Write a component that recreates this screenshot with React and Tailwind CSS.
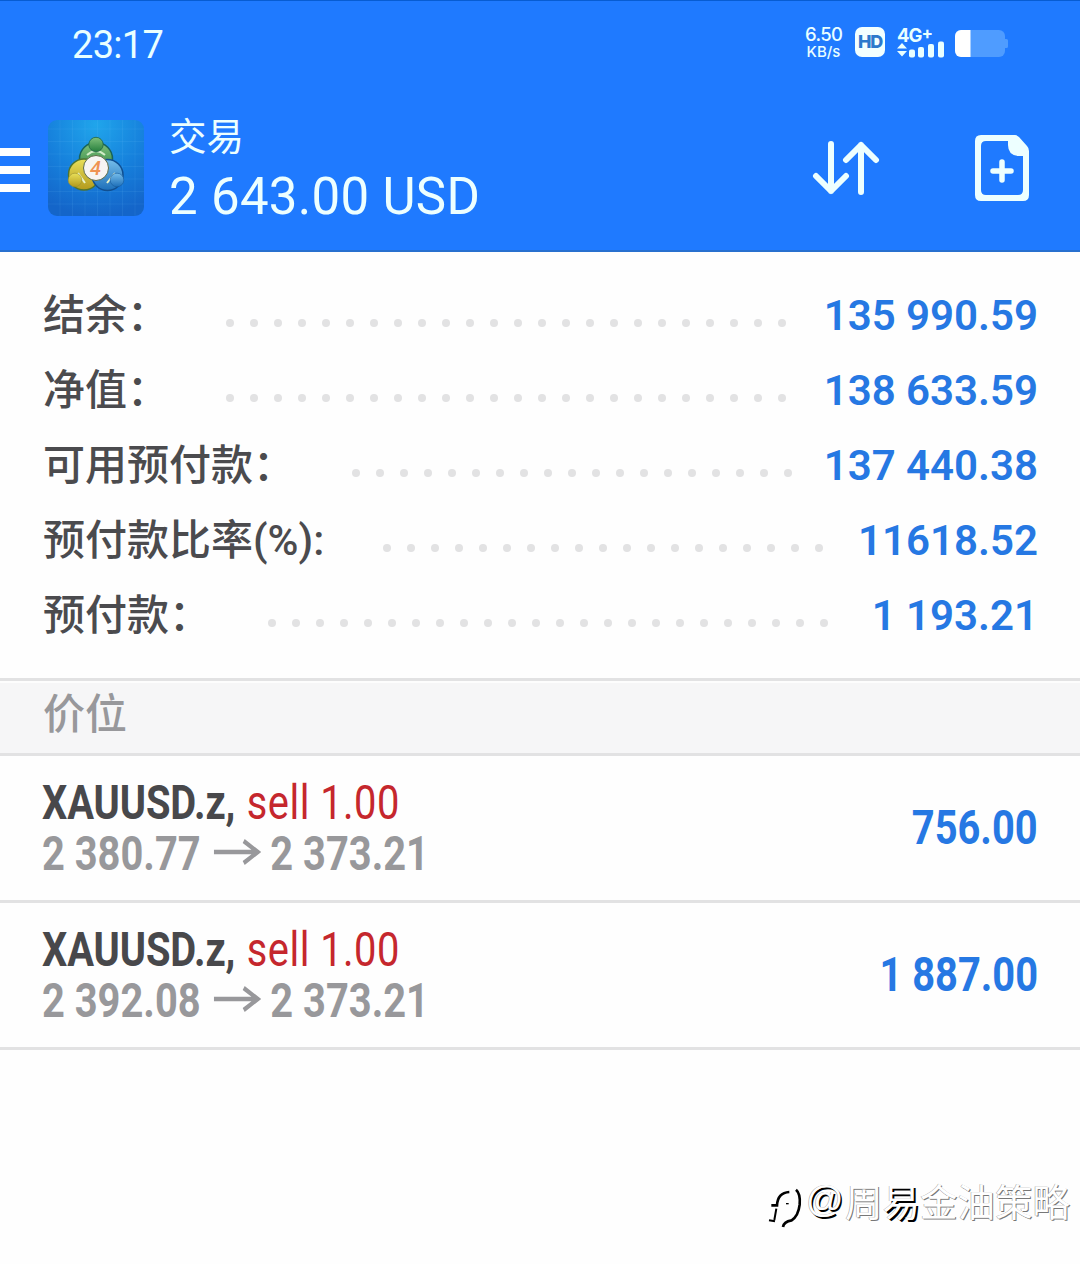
const summary = [
  { label: '结余：', value: '135 990.59', labelWidth: 'w-[183px]', dots: 24 },
  { label: '净值：', value: '138 633.59', labelWidth: 'w-[183px]', dots: 24 },
  { label: '可用预付款：', value: '137 440.38', labelWidth: 'w-[309px]', dots: 19 },
  { label: '预付款比率(%):', value: '11618.52', labelWidth: 'w-[340px]', dots: 19 },
  { label: '预付款：', value: '1 193.21', labelWidth: 'w-[225px]', dots: 24 },
];

const positions = [
  { symbol: 'XAUUSD.z', side: 'sell 1.00', open: '2 380.77', price: '2 373.21', profit: '756.00' },
  { symbol: 'XAUUSD.z', side: 'sell 1.00', open: '2 392.08', price: '2 373.21', profit: '1 887.00' },
];

function StatusBar() {
  return (
    <div className="flex h-[88px] items-start justify-between pl-[72px] pr-[72px] text-[#e9ffff]">
      <span className="mt-[24px] text-[38px] leading-[40px] tracking-[-0.7px]">23:17</span>
      <div className="flex items-start">
        <div className="mt-[24px] w-[37px] text-center font-['Inter'] font-medium">
          <div className="text-[18.500px] leading-[19px] tracking-[-0.6px]">6.50</div>
          <div className="text-[15px] leading-[15px]">KB/s</div>
        </div>
        <div className="ml-[13px] mt-[26px] flex h-[30px] w-[30px] items-center justify-center rounded-[7px] bg-[#f2ffff] font-['Inter'] text-[18px] font-extrabold leading-none tracking-[-1.2px] text-[#2c79cc]">
          HD
        </div>
        <div className="ml-[12px] mt-[24px] w-[47px]">
          <div className="flex h-[18px] font-['Inter'] text-[18.500px] font-bold leading-[20px] tracking-[-1px]">
            4G<span className="-mt-[2px] text-[17px]">+</span>
          </div>
          <svg className="-mt-[2px] block" width="47" height="17" viewBox="0 0 47 17" fill="currentColor">
            <path d="M5 2l5 5.500H0zM5 15.500l5-5.500H0z" />
            <rect x="12" y="8.500" width="6" height="8" rx="2" />
            <rect x="21" y="6" width="6" height="10.500" rx="2" />
            <rect x="31" y="3" width="6" height="13.500" rx="2" />
            <rect x="41" y="0.500" width="6" height="16" rx="2" />
          </svg>
        </div>
        <svg className="ml-[11px] mt-[29px]" width="53" height="27" viewBox="0 0 53 27">
          <rect width="50" height="27" rx="6" fill="#4f9cff" />
          <path d="M50 9h1.500a1.500 1.500 0 0 1 1.500 1.500v6a1.500 1.500 0 0 1-1.500 1.500H50z" fill="#4f9cff" />
          <path d="M6 0h9.500v27H6a6 6 0 0 1-6-6V6a6 6 0 0 1 6-6z" fill="#fff" />
        </svg>
      </div>
    </div>
  );
}

function AppLogo() {
  return (
    <svg width="96" height="96" viewBox="0 0 96 96">
      <defs>
        <radialGradient id="sky" cx="50%" cy="5%" r="95%">
          <stop offset="0" stopColor="#20a5eb" />
          <stop offset="0.55" stopColor="#1680dc" />
          <stop offset="1" stopColor="#1465c9" />
        </radialGradient>
        <linearGradient id="green" x1="0" y1="0" x2="0" y2="1">
          <stop offset="0" stopColor="#7fc07b" />
          <stop offset="1" stopColor="#267f3d" />
        </linearGradient>
        <linearGradient id="yellow" x1="0" y1="0" x2="0" y2="1">
          <stop offset="0" stopColor="#e9e05a" />
          <stop offset="1" stopColor="#b39a1c" />
        </linearGradient>
        <linearGradient id="blue" x1="0" y1="0" x2="0" y2="1">
          <stop offset="0" stopColor="#76bdea" />
          <stop offset="1" stopColor="#1d6fb9" />
        </linearGradient>
      </defs>
      <rect width="96" height="96" rx="9" fill="url(#sky)" />
      <path
        d="M12 0v96M24.500 0v96M37 0v96M49.500 0v96M62 0v96M74.500 0v96M87 0v96M0 9h96M0 21.500h96M0 34h96M0 46.500h96M0 59h96M0 71.500h96M0 84h96"
        stroke="#7fd0ff"
        strokeOpacity="0.1"
        strokeWidth="1"
      />
      <circle cx="48" cy="39" r="16.500" fill="url(#green)" stroke="#17635a" strokeWidth="1.500" />
      <circle cx="36" cy="54.500" r="15.500" fill="url(#yellow)" stroke="#4d7430" strokeWidth="1.500" />
      <circle cx="59.500" cy="55" r="15.500" fill="url(#blue)" stroke="#104f91" strokeWidth="1.500" />
      {/* inner edges of the three arms */}
      <path d="M39 35q9-8 18 0" fill="none" stroke="#d2ecc8" strokeWidth="2" />
      <path d="M30 53l7 10M59 63l8-10" fill="none" stroke="#e8f3c9" strokeWidth="2" />
      <circle cx="48" cy="24.500" r="7.200" fill="url(#green)" stroke="#1d6244" strokeWidth="0.800" />
      <circle cx="27" cy="60" r="6.800" fill="url(#yellow)" stroke="#9c9230" strokeWidth="0.600" />
      <circle cx="69" cy="60" r="6.800" fill="url(#blue)" stroke="#185b9c" strokeWidth="0.600" />
      <circle cx="48" cy="48" r="12.500" fill="#f7f5f3" stroke="#5d6b48" strokeWidth="1" />
      <text x="47.500" y="55" textAnchor="middle" fontFamily="Roboto, sans-serif" fontSize="20" fontStyle="italic" fontWeight="500" fill="#ef9353">
        4
      </text>
    </svg>
  );
}

function Header() {
  return (
    <header className="h-[252px] border-b-2 border-t border-b-[#2870cf] border-t-[#075cd2] bg-[#1f7aff]">
      <StatusBar />
      <div className="flex items-start">
        <div className="mt-[59px] flex w-[30px] flex-col gap-[10px]">
          <span className="h-2 bg-white" />
          <span className="h-2 bg-white" />
          <span className="h-2 bg-white" />
        </div>
        <div className="ml-[18px] mt-[31px]">
          <AppLogo />
        </div>
        <div className="ml-[25px] mt-[23px] whitespace-nowrap text-[#edffff]">
          <div className="text-[37.500px] leading-[50px]">交易</div>
          <div className="mt-[7px] text-[51px] leading-[56px] tracking-[0.3px]">2 643.00 USD</div>
        </div>
        <svg className="ml-auto mt-[50px]" width="68" height="60" viewBox="0 0 68 60" fill="none" stroke="#edffff" strokeWidth="6" strokeLinecap="round" strokeLinejoin="round">
          <path d="M19 5v47M4 37L19 52l15-15M49 53V6M34 21L49 6l15 15" />
        </svg>
        <svg className="ml-[95px] mr-[51px] mt-[46px]" width="54" height="66" viewBox="0 0 54 66">
          <path
            fill="#edffff"
            fillRule="evenodd"
            d="M6 0h34q2 0 4 2l8 9q2 2 2 5v44q0 6-6 6H6q-6 0-6-6V6q0-6 6-6zM11 6q-5 0-5 5v44q0 5 5 5h32q5 0 5-5V21h-5q-10-1-10-11V6z"
          />
          <path d="M27 27v18M18 36h18" stroke="#edffff" strokeWidth="5.500" strokeLinecap="round" />
        </svg>
      </div>
    </header>
  );
}

function SummaryRow({ label, value, labelWidth, dots }) {
  return (
    <div className="flex h-[75px] items-center pl-[43px] pr-[42px]">
      <span className={`${labelWidth} shrink-0 whitespace-nowrap text-[42px] font-medium leading-[75px] text-[#4b4b4e]`}>
        {label}
      </span>
      <div className="mt-[15px] flex gap-4">
        {Array.from({ length: dots }, (_, i) => (
          <span key={i} className="size-2 rounded-full bg-[#e2e2e3]" />
        ))}
      </div>
      <span className="ml-auto whitespace-pre text-[42px] font-semibold leading-[75px] text-[#2678e3]">{value}</span>
    </div>
  );
}

function PositionRow({ symbol, side, open, price, profit }) {
  return (
    <div className="flex h-[147px] items-start justify-between border-b-[3px] border-[#e2e2e3] pl-[42px] pr-[42px] text-[48px]">
      <div className="w-[500px] origin-left scale-x-[0.83] whitespace-nowrap pt-[18px] leading-[51px]">
        <div className="h-[51px] leading-[57px]">
          <span className="font-bold tracking-[-0.1px] text-[#48484b]">{symbol}, </span>
          <span className="ml-[2px] tracking-[0.6px] text-[#c5272d]">{side}</span>
        </div>
        <div className="flex h-[51px] items-center pt-[6px] font-bold text-[#98989b]">
          {open}
          <svg className="-mt-[4px] ml-[16px] mr-[11px]" width="57" height="26" viewBox="0 0 57 26" fill="none" stroke="currentColor" strokeWidth="4.500">
            <path d="M0 13h53M36 2l17 11-17 11" />
          </svg>
          {price}
        </div>
      </div>
      <span className="mt-[42px] origin-right scale-x-[0.83] font-bold leading-[60px] text-[#2678e3]">{profit}</span>
    </div>
  );
}

function Watermark() {
  return (
    <div className="flex items-start justify-end pr-[10px] pt-[123px] font-['Noto_Sans_CJK_SC',sans-serif]">
      <svg className="mt-[14px]" width="36" height="42" viewBox="24 36 108 126" fill="none" stroke="#000">
        <path d="M27 136l18 3M43 135l6-34" strokeWidth="6" />
        <path d="M34 91h17q2-38 37-40" strokeWidth="8" />
        <path d="M78 86h8" strokeWidth="4" />
        <path d="M108 44q14 12 11 45-4 34-24 47-24 4-26 20" strokeWidth="8" />
      </svg>
      <span className="ml-[2px] w-[37px] font-['Liberation_Sans'] text-[37px] leading-[54px] text-white [text-shadow:-0.5px_-0.5px_0_#999,1.5px_1.5px_0_#000]">@</span>
      <span className="ml-[2px] whitespace-nowrap text-[37.500px] leading-[54px] text-white [text-shadow:-0.5px_-0.5px_0_#999,1px_1px_0_#777]">
        周
        <span className="[text-shadow:-0.5px_-0.5px_0_#aaa,2px_1.5px_0_#000]">易</span>
        金油策略
      </span>
    </div>
  );
}

export default function App() {
  return (
    <div lang="zh-CN" className="h-[1264px] w-[1080px] overflow-hidden bg-[#fefefe] font-['Roboto','Noto_Sans_CJK_SC',sans-serif]">
      <Header />
      <section className="h-[426px] pt-[26px]">
        {summary.map((row) => (
          <SummaryRow key={row.label} {...row} />
        ))}
      </section>
      <div className="h-[78px] border-y-[3px] border-[#e2e2e3] bg-[#f6f6f7]">
        <div className="h-full border-t-2 border-[#fdfdfd] pl-[43px] text-[42px] font-medium leading-[64px] text-[#98989b]">价位</div>
      </div>
      {positions.map((p) => (
        <PositionRow key={p.open} {...p} />
      ))}
      <Watermark />
    </div>
  );
}
